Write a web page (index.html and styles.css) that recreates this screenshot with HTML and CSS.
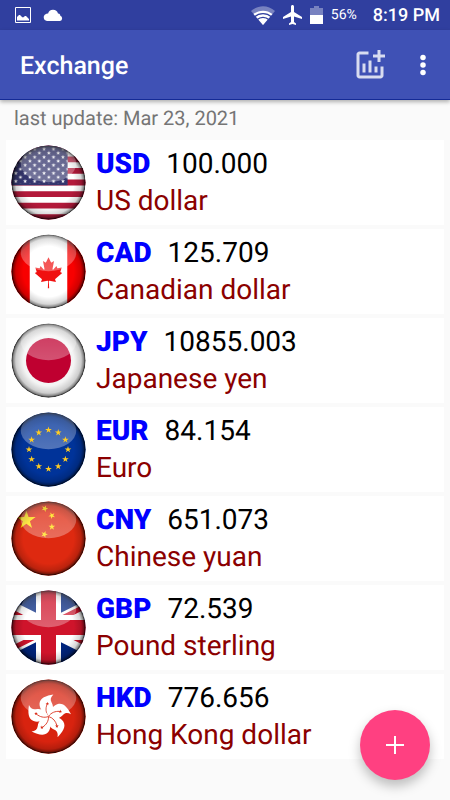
FILE: index.html
```html
<!DOCTYPE html>
<html lang="en">
<head>
    <meta charset="UTF-8">
    <meta name="viewport" content="width=device-width, initial-scale=1.0">
    <title>Exchange</title>
    <link rel="stylesheet" href="styles.css">
</head>
<body>
    <!-- shared shapes for the flags -->
    <svg class="defs" aria-hidden="true">
        <defs>
            <clipPath id="round"><circle cx="50" cy="50" r="49.5"/></clipPath>
            <radialGradient id="edge" cx="50%" cy="50%" r="50%">
                <stop offset="0.68" stop-color="#000" stop-opacity="0"/>
                <stop offset="0.88" stop-color="#000" stop-opacity="0.16"/>
                <stop offset="0.95" stop-color="#000" stop-opacity="0.45"/>
                <stop offset="1" stop-color="#000" stop-opacity="0.95"/>
            </radialGradient>
            <linearGradient id="shine" x1="0" y1="0" x2="0" y2="1">
                <stop offset="0" stop-color="#fff" stop-opacity="0.2"/>
                <stop offset="1" stop-color="#fff" stop-opacity="0.32"/>
            </linearGradient>
            <polygon id="star" points="0,-1 .225,-.309 .951,-.309 .363,.118 .588,.809 0,.382 -.588,.809 -.363,.118 -.951,-.309 -.225,-.309"/>
            <g id="gloss">
                <circle cx="50" cy="50" r="49.5" fill="url(#edge)"/>
                <ellipse cx="50" cy="25" rx="37" ry="24.5" fill="url(#shine)"/>
            </g>
            <pattern id="us-stars" width="12.6" height="10.75" patternUnits="userSpaceOnUse" x="0" y="2.6">
                <use href="#star" fill="#fff" transform="translate(6.3 2.7) scale(2.9)"/>
                <use href="#star" fill="#fff" transform="translate(0 8) scale(2.9)"/>
                <use href="#star" fill="#fff" transform="translate(12.6 8) scale(2.9)"/>
            </pattern>
            <clipPath id="uk-quarters"><path d="M30 15h30v15zv15h-30zh-30v-15zv-15h30z"/></clipPath>
            <g id="petal">
                <path fill="#fff" d="M50 50C43 46 38 40 38 33C38.500 25 47 22 56.500 20.500C53 24 52 27 54 31C58 38 56 45 50 50z"/>
                <path fill="none" stroke="#d8230f" stroke-width="1" d="M50 50C46 45 46 39 48 34"/>
                <use href="#star" fill="#d8230f" transform="translate(48.500 33) scale(2.600)"/>
            </g>
        </defs>
    </svg>

    <div class="status-bar">
        <svg viewBox="0 0 16 16" width="16" height="16">
            <path fill="none" stroke="#fff" d="M.5.5h15v15H.5z"/>
            <path fill="#fff" d="M2 13.500V10l2-2h1l2 2 1 .5 2-1.500h1l3 3v1.500z"/>
        </svg>
        <svg viewBox="0 0 20 12" width="20" height="12">
            <path fill="#fff" d="M4 12a3.600 3.600 0 0 1-.8-7C4 4.500 4.600 4.600 5 4.700A5.200 5.200 0 0 1 15 4.500c1 0 1.600.3 2 .9.300.5.300 1 .3 1.400A2.700 2.700 0 0 1 17 12z"/>
        </svg>
        <div class="status-right">
            <svg viewBox="0 0 24 19" width="24" height="19">
                <path fill="#fff" fill-opacity="0.350" d="M12 19 0 5C7-1.500 17-1.500 24 5z"/>
                <path fill="#fff" d="M12 19 2.500 8C8 3.500 16 3.500 21.500 8z"/>
                <path fill="none" stroke="#303f9f" stroke-width="1.300" d="M3.500 10.800C8.500 6.500 15.500 6.500 20.500 10.800M6 13.700C9.500 10.500 14.500 10.500 18 13.700"/>
            </svg>
            <svg viewBox="2 2 19 20" width="19" height="20">
                <path fill="#fff" d="M21 16v-2l-8-5V3.500c0-.83-.67-1.500-1.500-1.500S10 2.670 10 3.500V9l-8 5v2l8-2.500V19l-2 1.500V22l3.500-1 3.500 1v-1.500L13 19v-5.500l8 2.500z"/>
            </svg>
            <svg viewBox="0 0 13 18" width="13" height="18">
                <path fill="#fff" fill-opacity="0.350" d="M0 2h4V0h5v2h4v7H0z"/>
                <path fill="#fff" d="M0 9h13v9H0z"/>
            </svg>
            <span class="battery">56%</span>
            <span class="time">8:19 PM</span>
        </div>
    </div>

    <header class="app-bar">
        <h1>Exchange</h1>
        <button class="icon-button" aria-label="Add chart">
            <svg viewBox="0 0 24 24" width="36" height="36">
                <path fill="#fff" fill-opacity="0.800" d="M22 5v2h-3v3h-2V7h-3V5h3V2h2v3h3zM19 19H5V5h6V3H5c-1.100 0-2 .9-2 2v14c0 1.100.9 2 2 2h14c1.100 0 2-.9 2-2v-6h-2v6zM15 13v4h2v-4h-2zM11 17h2V9h-2v8zM9 17v-6H7v6h2z"/>
            </svg>
        </button>
        <button class="icon-button" aria-label="More options">
            <svg viewBox="0 0 24 24" width="30" height="30">
                <g fill="#fff"><circle cx="12" cy="6" r="2.200"/><circle cx="12" cy="12" r="2.200"/><circle cx="12" cy="18" r="2.200"/></g>
            </svg>
        </button>
    </header>

    <main>
        <p class="last-update">last update: Mar 23, 2021</p>
        <ul class="currencies">
            <li class="currency">
                <svg class="flag" viewBox="0 0 100 100">
                    <g clip-path="url(#round)">
                        <path fill="#fff" d="M0 0h100v100H0z"/>
                        <path stroke="#b3193a" stroke-width="7.690" d="M0 3.850h100M0 19.230h100M0 34.620h100M0 50h100M0 65.380h100M0 80.770h100M0 96.150h100"/>
                        <path fill="#34356d" d="M0 0h75.500v53.800H0z"/>
                        <path fill="url(#us-stars)" d="M0 2.600h75.500v48.600H0z"/>
                        <use href="#gloss"/>
                    </g>
                </svg>
                <div class="info">
                    <div class="rate"><b class="code">USD</b><span>100.000</span></div>
                    <div class="name">US dollar</div>
                </div>
            </li>
            <li class="currency">
                <svg class="flag" viewBox="0 0 100 100">
                    <g clip-path="url(#round)">
                        <path fill="#fff" d="M0 0h100v100H0z"/>
                        <path fill="#f80000" d="M0 0h25v100H0zM75 0h25v100H75z"/>
                        <path fill="#f01010" transform="translate(50 51.500) scale(.0098 .0102)" d="m-90 2030 45-863a95 95 0 0 0-111-98l-859 151 116-320a65 65 0 0 0-20-73l-941-762 212-99a65 65 0 0 0 34-79l-186-572 542 115a65 65 0 0 0 73-38l105-247 423 454a65 65 0 0 0 111-57l-204-1052 327 189a65 65 0 0 0 91-27l332-652 332 652a65 65 0 0 0 91 27l327-189-204 1052a65 65 0 0 0 111 57l423-454 105 247a65 65 0 0 0 73 38l542-115-186 572a65 65 0 0 0 34 79l212 99-941 762a65 65 0 0 0-20 73l116 320-859-151a95 95 0 0 0-111 98l45 863z"/>
                        <use href="#gloss"/>
                    </g>
                </svg>
                <div class="info">
                    <div class="rate"><b class="code">CAD</b><span>125.709</span></div>
                    <div class="name">Canadian dollar</div>
                </div>
            </li>
            <li class="currency">
                <svg class="flag" viewBox="0 0 100 100">
                    <g clip-path="url(#round)">
                        <path fill="#f4f4f4" d="M0 0h100v100H0z"/>
                        <circle cx="50" cy="50" r="30" fill="#bf0030"/>
                        <use href="#gloss"/>
                    </g>
                </svg>
                <div class="info">
                    <div class="rate"><b class="code">JPY</b><span>10855.003</span></div>
                    <div class="name">Japanese yen</div>
                </div>
            </li>
            <li class="currency">
                <svg class="flag" viewBox="0 0 100 100">
                    <g clip-path="url(#round)">
                        <path fill="#003399" d="M0 0h100v100H0z"/>
                        <use href="#gloss"/>
                        <g fill="#ffcc22">
                            <use href="#star" transform="translate(50 24) scale(4.700)"/>
                            <use href="#star" transform="translate(63 27.500) scale(4.700)"/>
                            <use href="#star" transform="translate(72.500 37) scale(4.700)"/>
                            <use href="#star" transform="translate(76 50) scale(4.700)"/>
                            <use href="#star" transform="translate(72.500 63) scale(4.700)"/>
                            <use href="#star" transform="translate(63 72.500) scale(4.700)"/>
                            <use href="#star" transform="translate(50 76) scale(4.700)"/>
                            <use href="#star" transform="translate(37 72.500) scale(4.700)"/>
                            <use href="#star" transform="translate(27.500 63) scale(4.700)"/>
                            <use href="#star" transform="translate(24 50) scale(4.700)"/>
                            <use href="#star" transform="translate(27.500 37) scale(4.700)"/>
                            <use href="#star" transform="translate(37 27.500) scale(4.700)"/>
                        </g>
                    </g>
                </svg>
                <div class="info">
                    <div class="rate"><b class="code">EUR</b><span>84.154</span></div>
                    <div class="name">Euro</div>
                </div>
            </li>
            <li class="currency">
                <svg class="flag" viewBox="0 0 100 100">
                    <g clip-path="url(#round)">
                        <path fill="#de2910" d="M0 0h100v100H0z"/>
                        <g fill="#ffde00">
                            <use href="#star" transform="translate(20.500 25.500) scale(13)"/>
                            <use href="#star" transform="translate(45 10) rotate(23) scale(4.700)"/>
                            <use href="#star" transform="translate(54.500 19.500) rotate(45) scale(4.700)"/>
                            <use href="#star" transform="translate(54.500 34.500) scale(4.700)"/>
                            <use href="#star" transform="translate(44.500 44.500) rotate(20) scale(4.700)"/>
                        </g>
                        <use href="#gloss"/>
                    </g>
                </svg>
                <div class="info">
                    <div class="rate"><b class="code">CNY</b><span>651.073</span></div>
                    <div class="name">Chinese yuan</div>
                </div>
            </li>
            <li class="currency">
                <svg class="flag" viewBox="0 0 100 100">
                    <g clip-path="url(#round)">
                        <g transform="translate(-50 0) scale(3.333)">
                            <path fill="#00247d" d="M0 0h60v30H0z"/>
                            <path stroke="#fff" stroke-width="6" d="M0 0 60 30M60 0 0 30"/>
                            <path stroke="#cf142b" stroke-width="4" clip-path="url(#uk-quarters)" d="M0 0 60 30M60 0 0 30"/>
                            <path stroke="#fff" stroke-width="10" d="M30 0v30M0 15h60"/>
                            <path stroke="#cf142b" stroke-width="6" d="M30 0v30M0 15h60"/>
                        </g>
                        <use href="#gloss"/>
                    </g>
                </svg>
                <div class="info">
                    <div class="rate"><b class="code">GBP</b><span>72.539</span></div>
                    <div class="name">Pound sterling</div>
                </div>
            </li>
            <li class="currency">
                <svg class="flag" viewBox="0 0 100 100">
                    <g clip-path="url(#round)">
                        <path fill="#d8230f" d="M0 0h100v100H0z"/>
                        <use href="#gloss"/>
                        <use href="#petal"/>
                        <use href="#petal" transform="rotate(72 50 50)"/>
                        <use href="#petal" transform="rotate(144 50 50)"/>
                        <use href="#petal" transform="rotate(216 50 50)"/>
                        <use href="#petal" transform="rotate(288 50 50)"/>
                    </g>
                </svg>
                <div class="info">
                    <div class="rate"><b class="code">HKD</b><span>776.656</span></div>
                    <div class="name">Hong Kong dollar</div>
                </div>
            </li>
        </ul>
    </main>

    <button class="fab" aria-label="Add currency">
        <svg viewBox="0 0 18 18" width="18" height="18">
            <path stroke="#fff" stroke-width="2" d="M9 0v18M0 9h18"/>
        </svg>
    </button>
</body>
</html>
```
FILE: styles.css
```css
* {
    box-sizing: border-box;
}
body {
    margin: 0;
    min-height: 100vh;
    background-color: #fafafa;
    font-family: Roboto, sans-serif;
    text-rendering: geometricPrecision;
}
svg {
    display: block;
    flex-shrink: 0;
}
.defs {
    position: absolute;
    width: 0;
    height: 0;
}
.status-bar {
    display: flex;
    align-items: center;
    gap: 12px;
    height: 30px;
    padding: 0 10px 0 15px;
    background-color: #303f9f;
    color: #fff;
}
.status-right {
    display: flex;
    align-items: center;
    gap: 8px;
    margin-left: auto;
}
.battery {
    font-size: 14px;
}
.time {
    margin-left: 8px;
    font-size: 18px;
    font-weight: 500;
}
.app-bar {
    display: flex;
    align-items: center;
    gap: 20px;
    height: 70px;
    padding: 0 12px 0 20px;
    background-color: #3f51b5;
    border-bottom: 1px solid #142a96;
    box-shadow: 0 2px 4px rgba(0, 0, 0, 0.3);
    color: #fff;
}
.app-bar h1 {
    flex: 1;
    margin: 0;
    padding-top: 4px;
    font-size: 25px;
    font-weight: 500;
}
.icon-button {
    padding: 0;
    border: none;
    background: none;
    cursor: pointer;
}
.last-update {
    margin: 0;
    padding: 3px 14px 1px;
    font-size: 20px;
    line-height: 30px;
    color: #757575;
}
.currencies {
    display: flex;
    flex-direction: column;
    gap: 4px;
    margin: 6px;
    padding: 0;
    list-style: none;
}
.currency {
    display: flex;
    gap: 10px;
    padding: 5px;
    background-color: #fff;
}
.flag {
    width: 75px;
    height: 75px;
}
.info {
    font-size: 28px;
    line-height: 37px;
}
.rate {
    display: flex;
    gap: 16px;
    color: #000;
}
.code {
    font-weight: 900;
    color: #0000ff;
}
.name {
    color: #8b0000;
}
.fab {
    position: fixed;
    right: 20px;
    bottom: 20px;
    display: flex;
    align-items: center;
    justify-content: center;
    width: 70px;
    height: 70px;
    padding: 0;
    border: none;
    border-radius: 50%;
    background-color: #ff4081;
    box-shadow: 0 6px 12px rgba(0, 0, 0, 0.25);
    cursor: pointer;
}
```
